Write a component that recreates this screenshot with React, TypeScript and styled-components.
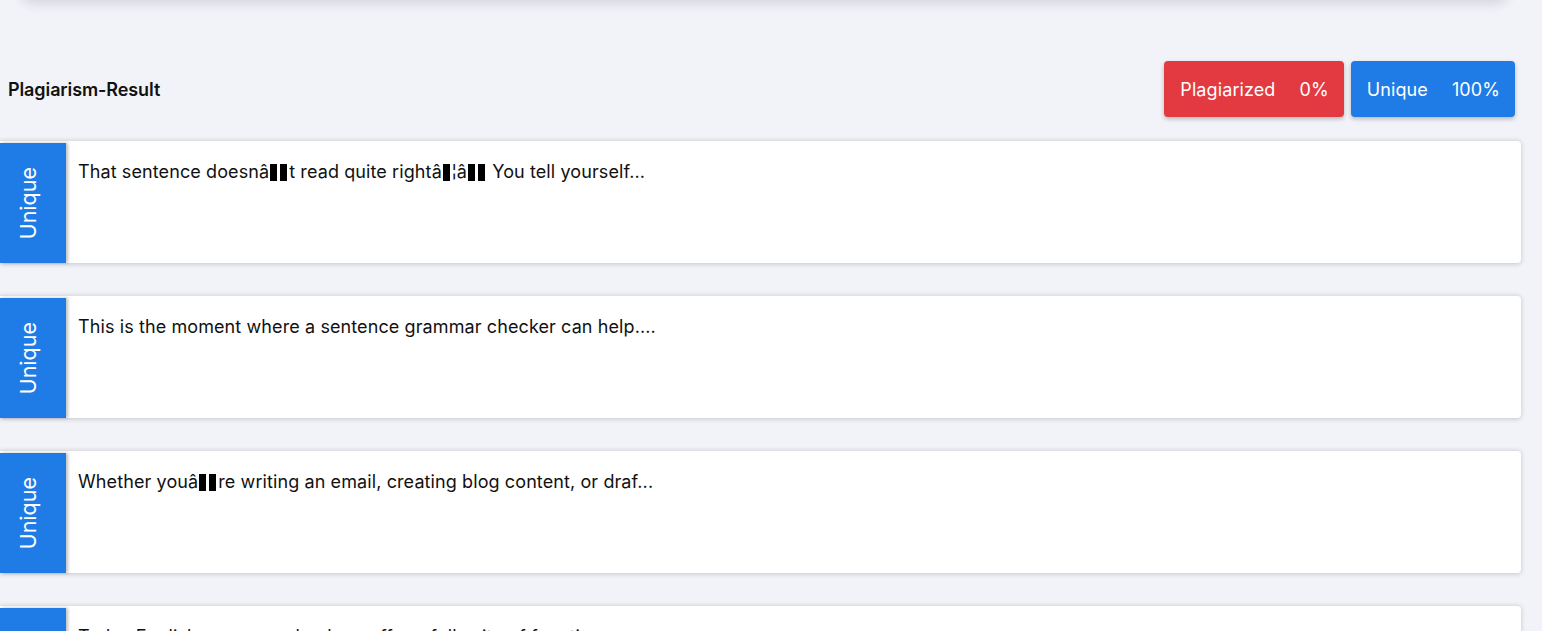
import React from "react";
import styled, { createGlobalStyle } from "styled-components";

const Global = createGlobalStyle`
  html, body { margin: 0; padding: 0; overflow: hidden; }
  body { background: #f2f3f8; font-family: Inter, "Open Sans", sans-serif; color: #111; }
`;

const Page = styled.div`
  display: flex;
  flex-direction: column;
  padding-right: 21px;
`;

const TopCard = styled.div`
  height: 40px;
  margin-top: -40px;
  margin-right: 12px;
  margin-left: 20px;
  background: #fff;
  border-radius: 0 0 14px 14px;
  box-shadow: 0 3px 12px rgba(40, 45, 70, 0.16);
`;

const Header = styled.div`
  display: flex;
  align-items: center;
  justify-content: space-between;
  margin-top: 61px;
  padding-left: 8px;
  padding-right: 6px;
  margin-bottom: 23px;
`;

const Title = styled.h2`
  margin: 0;
  font-size: 18px;
  font-weight: 600;
  letter-spacing: -0.1px;
  color: #111;
`;

const Stats = styled.div`
  display: flex;
  gap: 7px;
`;

const Stat = styled.div<{ $bg: string }>`
  display: flex;
  align-items: center;
  gap: 24px;
  height: 56px;
  padding: 0 15px 0 16px;
  box-sizing: border-box;
  background: ${(p) => p.$bg};
  color: #fff;
  font-size: 18px;
  letter-spacing: 0.1px;
  border-radius: 4px;
  box-shadow: 0 2px 4px rgba(0, 0, 0, 0.25);
`;

const List = styled.div`
  display: flex;
  flex-direction: column;
  gap: 32px;
`;

const Card = styled.div`
  display: flex;
  height: 123px;
  background: #fff;
  border-radius: 0 4px 4px 0;
  box-shadow: 0 1px 5px rgba(30, 35, 60, 0.22);
  border-top: 1px solid #dfe1e7;
  box-sizing: border-box;
`;

const Label = styled.div<{ $bg: string }>`
  flex: 0 0 66px;
  margin-top: 2px;
  display: flex;
  align-items: center;
  justify-content: center;
  padding-right: 10px;
  box-sizing: border-box;
  background: ${(p) => p.$bg};
  color: #fff;
  font-size: 21.5px;
  box-shadow: 2px 0 3px rgba(0, 0, 0, 0.25);
  position: relative;
  z-index: 1;
`;

const Vertical = styled.span`
  writing-mode: vertical-rl;
  transform: rotate(180deg);
`;

const Body = styled.div`
  flex: 1;
  padding: 18px 12px 0 12px;
  font-size: 18px;
  line-height: 25px;
  color: #111;
  letter-spacing: 0.1px;
`;

const Bad = styled.span`
  display: inline-block;
  width: 7px;
  height: 17px;
  margin: 0 2px 0 1px;
  background: #000;
  vertical-align: -3px;
`;

const rows: React.ReactNode[] = [
  <>
    That sentence doesnâ<Bad />
    <Bad />t read quite rightâ<Bad />¦â<Bad />
    <Bad /> You tell yourself...
  </>,
  <>This is the moment where a sentence grammar checker can help....</>,
  <>
    Whether youâ<Bad />
    <Bad />re writing an email, creating blog content, or draf...
  </>,
  <>Today English grammar checkers offer a full suite of functions...</>,
];

export default function App() {
  return (
    <>
      <Global />
      <Page>
        <TopCard />
        <Header>
          <Title>Plagiarism-Result</Title>
          <Stats>
            <Stat $bg="#e23a40">
              <span>Plagiarized</span>
              <span>0%</span>
            </Stat>
            <Stat $bg="#1f7be6">
              <span>Unique</span>
              <span>100%</span>
            </Stat>
          </Stats>
        </Header>
        <List>
          {rows.map((r, i) => (
            <Card key={i}>
              <Label $bg="#1f7be6">
                <Vertical>Unique</Vertical>
              </Label>
              <Body>{r}</Body>
            </Card>
          ))}
        </List>
      </Page>
    </>
  );
}
